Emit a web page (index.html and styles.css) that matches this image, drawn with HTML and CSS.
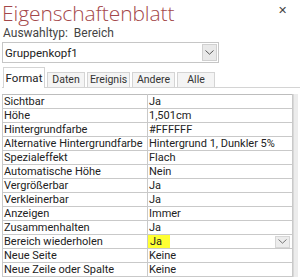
FILE: index.html
```html
<!DOCTYPE html>
<html lang="de">
<head>
<meta charset="utf-8">
<title>Eigenschaftenblatt</title>
<link rel="stylesheet" href="styles.css">
</head>
<body>
<div class="sheet">
  <div class="sheet-head">
    <h1 class="sheet-title">Eigenschaftenblatt</h1>
    <span class="sheet-close">&#x2715;</span>
  </div>
  <p class="sel-type">Auswahltyp:&nbsp; Bereich</p>
  <div class="combo">
    <span class="combo-text">Gruppenkopf1</span>
    <span class="combo-btn"><svg width="9" height="5" viewBox="0 0 9 5"><path d="M0.5 0.5 L4.5 4.2 L8.5 0.5" fill="none" stroke="#555" stroke-width="1"/></svg></span>
  </div>
  <div class="tabs">
    <span class="tab active">Format</span>
    <span class="tab">Daten</span>
    <span class="tab">Ereignis</span>
    <span class="tab">Andere</span>
    <span class="tab">Alle</span>
  </div>
  <div class="grid-wrap">
    <table class="props">
      <tr><td>Sichtbar</td><td>Ja</td></tr>
      <tr><td>Höhe</td><td>1,501cm</td></tr>
      <tr><td>Hintergrundfarbe</td><td>#FFFFFF</td></tr>
      <tr><td>Alternative Hintergrundfarbe</td><td>Hintergrund 1, Dunkler 5%</td></tr>
      <tr><td>Spezialeffekt</td><td>Flach</td></tr>
      <tr><td>Automatische Höhe</td><td>Nein</td></tr>
      <tr><td>Vergrößerbar</td><td>Ja</td></tr>
      <tr><td>Verkleinerbar</td><td>Ja</td></tr>
      <tr><td>Anzeigen</td><td>Immer</td></tr>
      <tr><td>Zusammenhalten</td><td>Ja</td></tr>
      <tr class="current"><td>Bereich wiederholen</td><td><div class="cur-cell"><span class="hl">Ja</span><span class="cell-btn"><svg width="9" height="5" viewBox="0 0 9 5"><path d="M0.5 0.5 L4.5 4.2 L8.5 0.5" fill="none" stroke="#777" stroke-width="1"/></svg></span></div></td></tr>
      <tr><td>Neue Seite</td><td>Keine</td></tr>
      <tr><td>Neue Zeile oder Spalte</td><td>Keine</td></tr>
    </table>
    <div class="vscroll"></div>
  </div>
</div>
</body>
</html>
```

FILE: styles.css
```css
*{box-sizing:border-box;}
html,body{margin:0;padding:0;}
body{
  background:#fff;
  color:#222;
  font-family:Roboto,'Open Sans',sans-serif;
  font-size:11px;
  width:300px;
  height:279px;
  overflow:hidden;
}
.sheet{ padding:0 0 0 2px; }

.sheet-head{ display:flex; justify-content:space-between; align-items:flex-start; }
.sheet-title{ margin:0; font-family:'Open Sans',sans-serif; font-weight:300; font-size:21px; line-height:26px; color:#a4474a; letter-spacing:-.1px; }
.sheet-close{ font-size:11px; color:#444; margin:4px 13px 0 0; }

.sel-type{ margin:0; height:14px; line-height:14px; font-size:12px; color:#444; padding-left:1px; }

.combo{ display:flex; align-items:center; justify-content:space-between; width:217px; height:21px; margin-top:2px; border:1px solid #c6c6c6; background:#fff; padding:0 1px 0 2px; }
.combo-text{ font-size:11.5px; color:#222; }
.combo-btn{ display:flex; align-items:center; justify-content:center; width:15px; height:17px; background:#e9e9e9; border:1px solid #d0d0d0; }

/* tab strip: widths follow the Access sheet */
.tabs{ display:flex; align-items:flex-end; gap:2px; height:21px; margin-top:4px; border-bottom:1px solid #d4d4d4; padding-left:1px; }
.tab{ height:15px; line-height:14px; text-align:center; font-size:10.5px; color:#333; background:#f4f4f4; border:1px solid #d4d4d4; border-bottom:none; white-space:nowrap; }
.tab:nth-child(1){ width:42px; }
.tab:nth-child(2){ width:38px; }
.tab:nth-child(3){ width:43px; }
.tab:nth-child(4){ width:43px; }
.tab:nth-child(5){ width:38px; }
.tab.active{ height:21px; line-height:20px; background:#fff; color:#222; font-size:11.5px; margin-bottom:-1px; }

.grid-wrap{ display:flex; margin-top:6px; }
.props{ width:291px; border-collapse:collapse; table-layout:fixed; }
.props td{ height:14px; padding:0 2px 0 1px; border:1px solid #c9c9c9; font-size:11px; line-height:12px; white-space:nowrap; overflow:hidden; }
.props td:first-child{ width:145px; }
.props tr:first-child td{ border-top-color:#bdbdbd; }
.cur-cell{ display:flex; justify-content:space-between; align-items:center; height:13px; margin-left:-1px; }
.hl{ background:#ffff33; padding:0 8px 0 2px; line-height:13px; }
.cell-btn{ display:flex; align-items:center; justify-content:center; width:15px; height:12px; background:#ececec; border:1px solid #d6d6d6; }
.vscroll{ width:5px; background:#ececec; border-left:1px solid #d8d8d8; }
```
